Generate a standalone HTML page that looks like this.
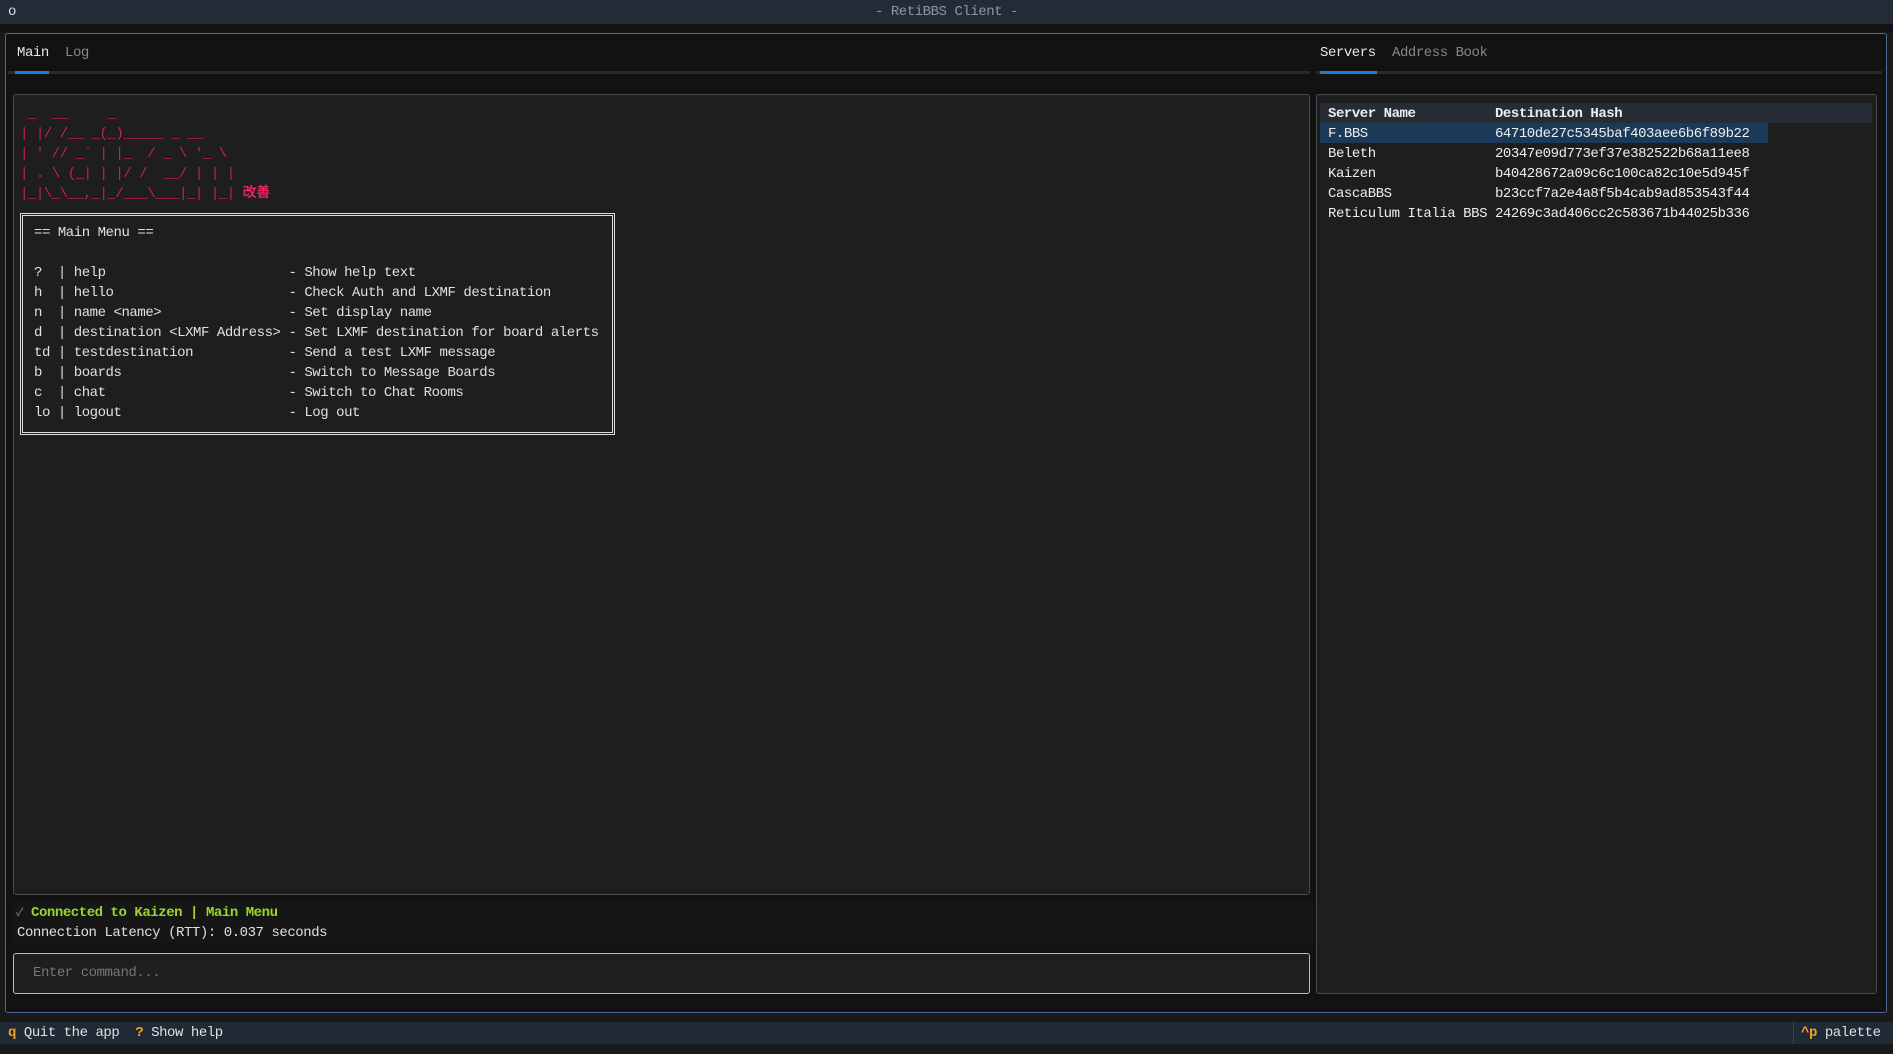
<!DOCTYPE html>
<html><head><meta charset="utf-8"><style>
*{margin:0;padding:0;box-sizing:border-box}
body{width:1893px;height:1054px;background:#1a1a1a;position:relative;overflow:hidden;font-family:"Liberation Mono","Noto Sans CJK JP",monospace;font-size:14px;letter-spacing:-0.45px;color:#e0e0e0}
.a{position:absolute;white-space:pre;line-height:20px}
.t{margin-top:1px}
</style></head><body>
<div class="a" style="left:0;top:0;width:1893px;height:24px;background:#222c36;line-height:24px;text-align:center;color:#8d96a0">- RetiBBS Client -</div>
<div class="a" style="left:8px;top:0;line-height:24px;color:#ddd">o</div>
<div class="a" style="left:0;top:24px;width:1893px;height:8px;background:#121212"></div>
<div class="a" style="left:5px;top:33px;width:1882px;height:980px;border:1px solid #4d6a96;border-radius:3px;background:#121212"></div>
<div class="a t" style="left:17px;top:42px;color:#e8e8e8">Main</div>
<div class="a t" style="left:65px;top:42px;color:#888">Log</div>
<div class="a" style="left:8px;top:71px;width:1302px;height:3px;background:#2a2a2a"></div>
<div class="a" style="left:15px;top:71px;width:34px;height:3px;background:#1e7fd0"></div>
<div class="a t" style="left:1320px;top:42px;color:#e8e8e8">Servers</div>
<div class="a t" style="left:1392px;top:42px;color:#888">Address Book</div>
<div class="a" style="left:1316px;top:71px;height:3px;background:#2a2a2a;width:566px"></div>
<div class="a" style="left:1320px;top:71px;width:57px;height:3px;background:#1e7fd0"></div>
<div class="a" style="left:13px;top:94px;width:1297px;height:801px;border:1px solid #4a4a4a;border-radius:3px;background:#1e1e1e"></div>
<div class="a t" style="left:20px;top:103px;color:#d81b4f;line-height:20px"> _  __     _
| |/ /__ _(_)_____ _ __
| ' // _` | |_  / _ \ '_ \
| . \ (_| | |/ /  __/ | | |
|_|\_\__,_|_/___\___|_| |_| <b style="color:#e8245c">改善</b></div>
<div class="a" style="left:20px;top:213px;width:595px;height:222px;border:3px double #ddd;background:#1e1e1e"></div>
<div class="a t" style="left:34px;top:222px;color:#e0e0e0">== Main Menu ==

?  | help                       - Show help text
h  | hello                      - Check Auth and LXMF destination
n  | name &lt;name&gt;                - Set display name
d  | destination &lt;LXMF Address&gt; - Set LXMF destination for board alerts
td | testdestination            - Send a test LXMF message
b  | boards                     - Switch to Message Boards
c  | chat                       - Switch to Chat Rooms
lo | logout                     - Log out</div>
<div class="a" style="left:13px;top:902px;width:1300px;height:41px;background:#161616"></div>
<div class="a t" style="left:16px;top:902px;color:#9ad62a"><span style="color:#7a9a50;font-size:11px">✓</span> <b>Connected to Kaizen | Main Menu</b></div>
<div class="a t" style="left:17px;top:922px;color:#e0e0e0">Connection Latency (RTT): 0.037 seconds</div>
<div class="a" style="left:13px;top:953px;width:1297px;height:41px;border:1px solid #bbb;border-radius:3px;background:#1e1e1e"></div>
<div class="a t" style="left:33px;top:962px;color:#777">Enter command...</div>
<div class="a" style="left:1316px;top:94px;width:561px;height:900px;border:1px solid #4a4a4a;border-radius:3px;background:#1e1e1e"></div>
<div class="a" style="left:1320px;top:103px;width:552px;height:20px;background:#262c33"></div>
<div class="a" style="left:1320px;top:123px;width:448px;height:20px;background:#1b3a5a"></div>
<div class="a t" style="left:1328px;top:103px;color:#eee"><b>Server Name</b>          <b>Destination Hash</b>
F.BBS                64710de27c5345baf403aee6b6f89b22
Beleth               20347e09d773ef37e382522b68a11ee8
Kaizen               b40428672a09c6c100ca82c10e5d945f
CascaBBS             b23ccf7a2e4a8f5b4cab9ad853543f44
Reticulum Italia BBS 24269c3ad406cc2c583671b44025b336</div>
<div class="a" style="left:0;top:1022px;width:1893px;height:22px;background:#1f2a35"></div>
<div class="a" style="left:8px;top:1023px"><b style="color:#f0a030">q</b> Quit the app  <b style="color:#f0a030">?</b> Show help</div>
<div class="a" style="left:1793px;top:1022px;width:1px;height:22px;background:#3a4550"></div>
<div class="a" style="left:1801px;top:1023px"><b style="color:#f0a030">^p</b> palette</div>
</body></html>
